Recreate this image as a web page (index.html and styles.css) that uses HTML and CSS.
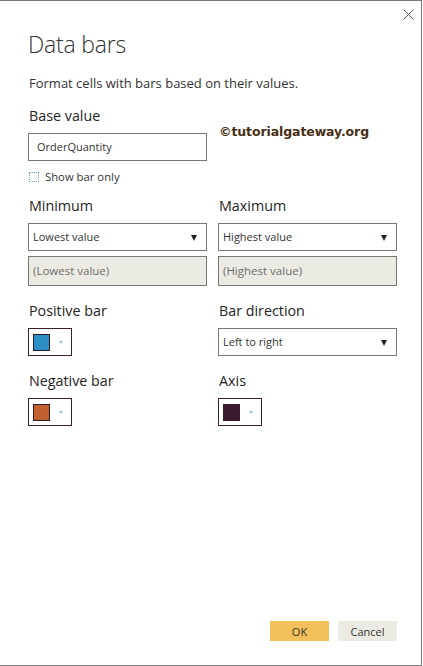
FILE: index.html
```html
<!DOCTYPE html>
<html>
<head>
<meta charset="utf-8">
<link rel="stylesheet" href="styles.css">
</head>
<body>
<div class="dialog">
  <button class="close" aria-label="Close">
    <svg width="11" height="11" viewBox="0 0 11 11"><path d="M0.5 0.5 L10.5 10.5 M10.5 0.5 L0.5 10.5" stroke="#555" stroke-width="1" fill="none"/></svg>
  </button>
  <h1 class="title">Data bars</h1>
  <p class="desc">Format cells with bars based on their values.</p>

  <div class="row base-row">
    <div class="col">
      <div class="label">Base value</div>
      <div class="field">OrderQuantity</div>
      <label class="check"><span class="box"></span>Show bar only</label>
    </div>
    <div class="col">
      <div class="watermark">©tutorialgateway.org</div>
    </div>
  </div>

  <div class="row">
    <div class="col">
      <div class="label">Minimum</div>
      <div class="select">Lowest value<span class="arrow"></span></div>
      <div class="field disabled">(Lowest value)</div>
    </div>
    <div class="col">
      <div class="label">Maximum</div>
      <div class="select">Highest value<span class="arrow"></span></div>
      <div class="field disabled">(Highest value)</div>
    </div>
  </div>

  <div class="row">
    <div class="col">
      <div class="label">Positive bar</div>
      <div class="picker"><span class="swatch blue"></span><span class="chev"></span></div>
    </div>
    <div class="col">
      <div class="label">Bar direction</div>
      <div class="select">Left to right<span class="arrow"></span></div>
    </div>
  </div>

  <div class="row">
    <div class="col">
      <div class="label">Negative bar</div>
      <div class="picker"><span class="swatch orange"></span><span class="chev"></span></div>
    </div>
    <div class="col">
      <div class="label">Axis</div>
      <div class="picker"><span class="swatch dark"></span><span class="chev"></span></div>
    </div>
  </div>

  <div class="spacer"></div>
  <div class="actions">
    <button class="btn ok">OK</button>
    <button class="btn cancel">Cancel</button>
  </div>
</div>
</body>
</html>
```
FILE: styles.css
```css
html, body {
  margin: 0;
  padding: 0;
  background: #fff;
}
body {
  font-family: "Open Sans", "Noto Sans", sans-serif;
  color: #252423;
}
.dialog {
  position: relative;
  box-sizing: border-box;
  width: 422px;
  height: 666px;
  border-top: 1px solid #7a7a7a;
  border-right: 1px solid #7a7a7a;
  border-bottom: 1px solid #7a7a7a;
  padding: 0 24px 0 28px;
  display: flex;
  flex-direction: column;
}
.close {
  position: absolute;
  top: 8px;
  right: 7px;
  border: 0;
  background: none;
  padding: 0;
  width: 11px;
  height: 11px;
  line-height: 0;
}
.title {
  margin: 27px 0 0 0;
  font-weight: 300;
  font-size: 23px;
  line-height: 32px;
  color: #333;
  letter-spacing: -0.2px;
}
.desc {
  margin: 15px 0 0 1px;
  font-size: 13px;
  line-height: 17px;
  color: #333;
}
.row {
  display: flex;
  gap: 11px;
}
.col {
  width: 180px;
  display: flex;
  flex-direction: column;
}
.base-row {
  margin-top: 14px;
}
.label {
  font-size: 14.3px;
  line-height: 20px;
  margin-left: 1px;
  margin-bottom: 7px;
  color: #252423;
}
.row + .row {
  margin-top: 15px;
}
.base-row + .row {
  margin-top: 12px;
}
.field, .select {
  box-sizing: border-box;
  height: 28px;
  border: 1px solid #777;
  font-size: 11px;
  line-height: 26px;
  padding: 0 8px;
  color: #333;
  background: #fff;
}
.select {
  position: relative;
  padding-left: 4px;
}
.arrow {
  position: absolute;
  right: 9px;
  top: 11px;
  width: 0;
  height: 0;
  border-left: 3.5px solid transparent;
  border-right: 3.5px solid transparent;
  border-top: 6px solid #2a1f2a;
}
.field.disabled {
  margin-top: 5px;
  height: 30px;
  line-height: 28px;
  background: #ebebe4;
  color: #6b6b6b;
  padding-left: 4px;
  font-size: 11.5px;
}
.check {
  display: flex;
  align-items: center;
  margin-top: 9px;
  margin-left: 1px;
  font-size: 11.3px;
  line-height: 14px;
  color: #333;
}
.check .box {
  box-sizing: border-box;
  width: 10px;
  height: 10px;
  border: 1px dotted #6fa8dc;
  margin-right: 6px;
}
.watermark {
  margin-top: 18px;
  margin-left: 1px;
  font-family: "DejaVu Sans", sans-serif;
  font-weight: bold;
  font-size: 12.5px;
  color: #4a2e14;
  letter-spacing: -0.1px;
}
.picker {
  box-sizing: border-box;
  width: 44px;
  height: 28px;
  border: 1px solid #3a1f2c;
  display: flex;
  align-items: center;
  padding-left: 4px;
}
.swatch {
  box-sizing: border-box;
  width: 17px;
  height: 17px;
  border: 1px solid #2b1a24;
}
.swatch.blue { background: #2b8fc6; }
.swatch.orange { background: #c0612f; }
.swatch.dark { background: #3a1a2c; border-color: #3a1a2c; }
.chev {
  margin-left: 9px;
  width: 0;
  height: 0;
  border-left: 2.5px solid transparent;
  border-right: 2.5px solid transparent;
  border-top: 3px solid #9cc3e0;
}
.spacer {
  flex: 1;
}
.actions {
  display: flex;
  justify-content: flex-end;
  gap: 9px;
  margin-bottom: 24px;
}
.btn {
  width: 59px;
  height: 20px;
  border: 0;
  padding: 0;
  font-family: "Open Sans", "Noto Sans", sans-serif;
  font-size: 11px;
  color: #333;
}
.ok { background: #f2c05a; }
.cancel { background: #ebebe4; }
```
